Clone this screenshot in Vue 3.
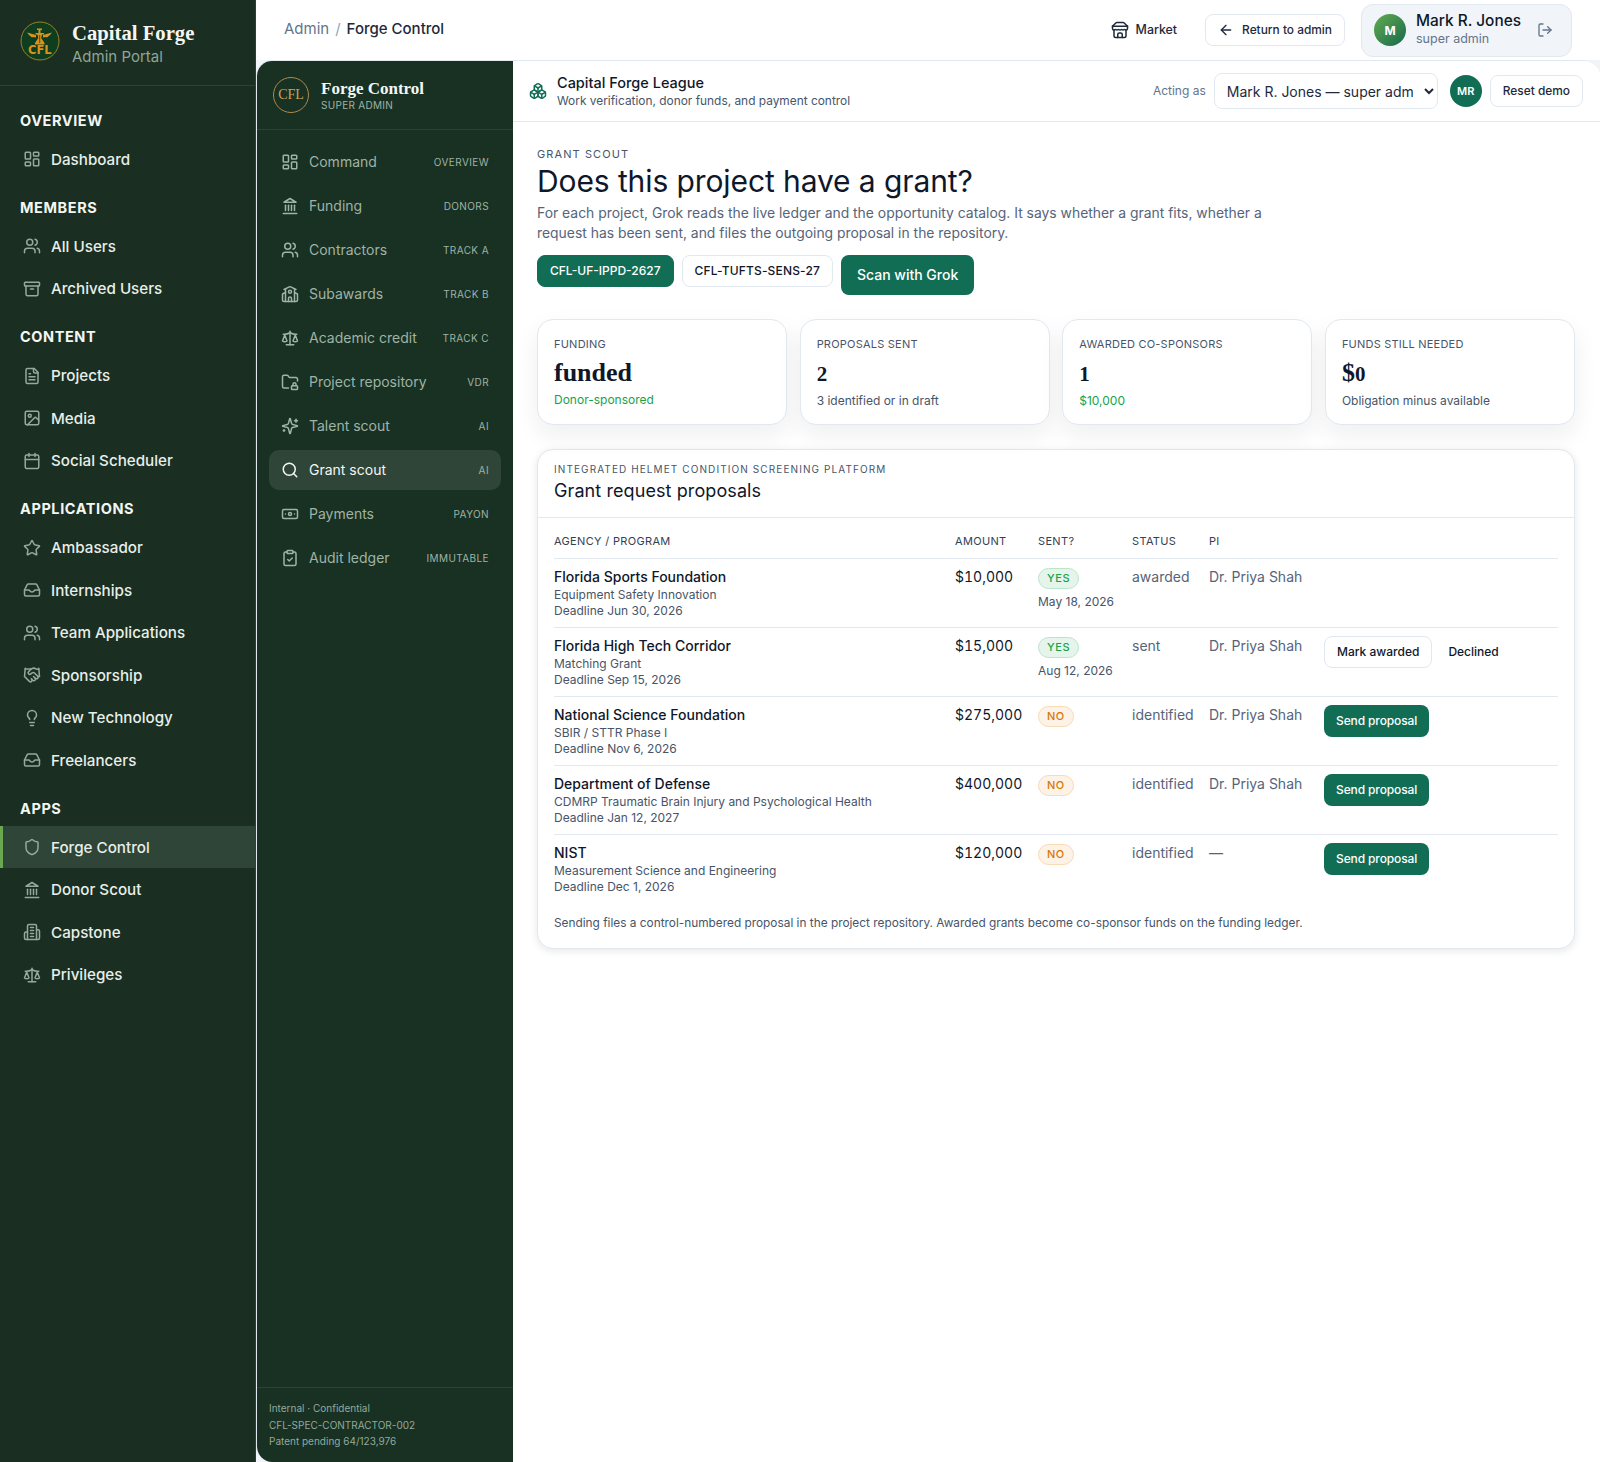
<script setup>
const rect = (x, y, w, h, r) =>
  `M${x + r} ${y}h${w - 2 * r}a${r} ${r} 0 0 1 ${r} ${r}v${h - 2 * r}a${r} ${r} 0 0 1-${r} ${r}h-${w - 2 * r}a${r} ${r} 0 0 1-${r}-${r}v-${h - 2 * r}a${r} ${r} 0 0 1 ${r}-${r}z`
const circle = (cx, cy, r) => `M${cx - r} ${cy}a${r} ${r} 0 1 0 ${2 * r} 0a${r} ${r} 0 1 0-${2 * r} 0z`

const icons = {
  dashboard: [rect(3, 3, 7, 9, 1), rect(14, 3, 7, 5, 1), rect(14, 12, 7, 9, 1), rect(3, 16, 7, 5, 1)],
  users: ['M16 21v-2a4 4 0 0 0-4-4H6a4 4 0 0 0-4 4v2', circle(9, 7, 4), 'M22 21v-2a4 4 0 0 0-3-3.87', 'M16 3.13a4 4 0 0 1 0 7.75'],
  archive: [rect(2, 3, 20, 5, 1), 'M4 8v11a2 2 0 0 0 2 2h12a2 2 0 0 0 2-2V8', 'M10 12h4'],
  file: ['M15 2H6a2 2 0 0 0-2 2v16a2 2 0 0 0 2 2h12a2 2 0 0 0 2-2V7Z', 'M14 2v4a2 2 0 0 0 2 2h4', 'M10 9H8', 'M16 13H8', 'M16 17H8'],
  image: [rect(3, 3, 18, 18, 2), circle(9, 9, 2), 'm21 15-3.086-3.086a2 2 0 0 0-2.828 0L6 21'],
  calendar: ['M8 2v4', 'M16 2v4', rect(3, 4, 18, 18, 2), 'M3 10h18'],
  star: ['M11.525 2.295a.53.53 0 0 1 .95 0l2.31 4.679a2.123 2.123 0 0 0 1.595 1.16l5.166.756a.53.53 0 0 1 .294.904l-3.736 3.638a2.123 2.123 0 0 0-.611 1.878l.882 5.14a.53.53 0 0 1-.771.56l-4.618-2.428a2.122 2.122 0 0 0-1.973 0L6.396 21.01a.53.53 0 0 1-.77-.56l.881-5.139a2.122 2.122 0 0 0-.611-1.879L2.16 9.795a.53.53 0 0 1 .294-.906l5.165-.755a2.122 2.122 0 0 0 1.597-1.16z'],
  inbox: ['M22 12h-5.500c-.8 0-1.300.5-1.700 1.200-.5.9-1.300 1.300-2.800 1.300s-2.300-.4-2.800-1.300C8.800 12.500 8.300 12 7.500 12H2', 'M5.450 5.110 2 12v6a2 2 0 0 0 2 2h16a2 2 0 0 0 2-2v-6l-3.450-6.890A2 2 0 0 0 16.760 4H7.240a2 2 0 0 0-1.790 1.110z'],
  handshake: ['m11 17 2 2a1 1 0 1 0 3-3', 'm14 14 2.5 2.5a1 1 0 1 0 3-3l-3.88-3.88a3 3 0 0 0-4.24 0l-.88.88a1 1 0 1 1-3-3l2.81-2.81a5.79 5.79 0 0 1 7.06-.87l.47.28a2 2 0 0 0 1.42.25L21 4', 'm21 3 1 11h-2', 'M3 3 2 14l6.5 6.5a1 1 0 1 0 3-3', 'M3 4h8'],
  bulb: ['M15 14c.2-1 .7-1.7 1.5-2.5 1-.9 1.5-2.2 1.5-3.5A6 6 0 0 0 6 8c0 1 .2 2.2 1.5 3.5.7.7 1.3 1.5 1.5 2.5', 'M9 18h6', 'M10 22h4'],
  shield: ['M20 13c0 5-3.5 7.5-7.66 8.95a1 1 0 0 1-.67-.01C7.5 20.5 4 18 4 13V6a1 1 0 0 1 1-1c2 0 4.5-1.2 6.24-2.72a1.17 1.17 0 0 1 1.52 0C14.51 3.81 17 5 19 5a1 1 0 0 1 1 1z'],
  landmark: ['M3 22h18', 'M6 18v-7', 'M10 18v-7', 'M14 18v-7', 'M18 18v-7', 'M12 2l8 5H4z'],
  building: ['M6 22V4a2 2 0 0 1 2-2h8a2 2 0 0 1 2 2v18Z', 'M6 12H4a2 2 0 0 0-2 2v6a2 2 0 0 0 2 2h2', 'M18 9h2a2 2 0 0 1 2 2v9a2 2 0 0 1-2 2h-2', 'M10 6h4', 'M10 10h4', 'M10 14h4', 'M10 18h4'],
  scale: ['m16 16 3-8 3 8c-.87.65-1.92 1-3 1s-2.13-.35-3-1Z', 'm2 16 3-8 3 8c-.87.65-1.92 1-3 1s-2.13-.35-3-1Z', 'M7 21h10', 'M12 3v18', 'M3 7h2c2 0 5-1 7-2 2 1 5 2 7 2h2'],
  school: ['M14 22v-4a2 2 0 1 0-4 0v4', 'm18 10 3.447 1.724a1 1 0 0 1 .553.894V20a2 2 0 0 1-2 2H4a2 2 0 0 1-2-2v-7.382a1 1 0 0 1 .553-.894L6 10', 'M18 5v17', 'm4 6 7.106-3.553a2 2 0 0 1 1.788 0L20 6', 'M6 5v17', circle(12, 9, 2)],
  folderLock: [rect(14, 17, 8, 5, 1), 'M10 20H4a2 2 0 0 1-2-2V5a2 2 0 0 1 2-2h3.9a2 2 0 0 1 1.69.9l.81 1.2a2 2 0 0 0 1.67.9H20a2 2 0 0 1 2 2v2.5', 'M20 17v-2a2 2 0 1 0-4 0v2'],
  sparkles: ['M9.937 15.5A2 2 0 0 0 8.5 14.063l-6.135-1.582a.5.5 0 0 1 0-.962L8.5 9.936A2 2 0 0 0 9.937 8.5l1.582-6.135a.5.5 0 0 1 .963 0L14.063 8.5A2 2 0 0 0 15.5 9.937l6.135 1.581a.5.5 0 0 1 0 .964L15.5 14.063a2 2 0 0 0-1.437 1.437l-1.582 6.135a.5.5 0 0 1-.963 0z', 'M20 3v4', 'M22 5h-4', 'M4 17v2', 'M5 18H3'],
  search: [circle(11, 11, 8), 'm21 21-4.3-4.3'],
  banknote: [rect(2, 6, 20, 12, 2), circle(12, 12, 2), 'M6 12h.01M18 12h.01'],
  clipboard: [rect(8, 2, 8, 4, 1), 'M16 4h2a2 2 0 0 1 2 2v14a2 2 0 0 1-2 2H6a2 2 0 0 1-2-2V6a2 2 0 0 1 2-2h2', 'm9 14 2 2 4-4'],
  store: ['m2 7 4.41-4.41A2 2 0 0 1 7.83 2h8.34a2 2 0 0 1 1.42.59L22 7', 'M4 12v8a2 2 0 0 0 2 2h12a2 2 0 0 0 2-2v-8', 'M15 22v-4a2 2 0 0 0-2-2h-2a2 2 0 0 0-2 2v4', 'M2 7h20', 'M22 7v3a2 2 0 0 1-2 2a2.7 2.7 0 0 1-1.59-.63.7.7 0 0 0-.82 0A2.7 2.7 0 0 1 16 12a2.7 2.7 0 0 1-1.59-.63.7.7 0 0 0-.82 0A2.7 2.7 0 0 1 12 12a2.7 2.7 0 0 1-1.59-.63.7.7 0 0 0-.82 0A2.7 2.7 0 0 1 8 12a2.7 2.7 0 0 1-1.59-.63.7.7 0 0 0-.82 0A2.7 2.7 0 0 1 4 12a2 2 0 0 1-2-2V7'],
  arrowLeft: ['m12 19-7-7 7-7', 'M19 12H5'],
  logout: ['M9 21H5a2 2 0 0 1-2-2V5a2 2 0 0 1 2-2h4', 'm16 17 5-5-5-5', 'M21 12H9'],
  boxes: ['M2.97 12.92A2 2 0 0 0 2 14.63v3.24a2 2 0 0 0 .97 1.71l3 1.8a2 2 0 0 0 2.06 0L12 19v-5.5l-5-3-4.03 2.42Z', 'm7 16.5-4.74-2.85', 'm7 16.5 5-3', 'M7 16.5v5.17', 'M12 13.5V19l3.97 2.38a2 2 0 0 0 2.06 0l3-1.8a2 2 0 0 0 .97-1.71v-3.24a2 2 0 0 0-.97-1.71L17 10.5l-5 3Z', 'm17 16.5-5-3', 'm17 16.5 4.74-2.85', 'M17 16.5v5.17', 'M7.97 4.42A2 2 0 0 0 7 6.13v4.37l5 3 5-3V6.13a2 2 0 0 0-.97-1.71l-3-1.8a2 2 0 0 0-2.06 0l-3 1.8Z', 'M12 8 7.26 5.15', 'm12 8 4.74-2.85', 'M12 13.5V8']
}

const sections = [
  { title: 'Overview', items: [{ label: 'Dashboard', icon: 'dashboard' }] },
  { title: 'Members', items: [{ label: 'All Users', icon: 'users' }, { label: 'Archived Users', icon: 'archive' }] },
  { title: 'Content', items: [{ label: 'Projects', icon: 'file' }, { label: 'Media', icon: 'image' }, { label: 'Social Scheduler', icon: 'calendar' }] },
  {
    title: 'Applications',
    items: [
      { label: 'Ambassador', icon: 'star' },
      { label: 'Internships', icon: 'inbox' },
      { label: 'Team Applications', icon: 'users' },
      { label: 'Sponsorship', icon: 'handshake' },
      { label: 'New Technology', icon: 'bulb' },
      { label: 'Freelancers', icon: 'inbox' }
    ]
  },
  {
    title: 'Apps',
    items: [
      { label: 'Forge Control', icon: 'shield', active: true },
      { label: 'Donor Scout', icon: 'landmark' },
      { label: 'Capstone', icon: 'building' },
      { label: 'Privileges', icon: 'scale' }
    ]
  }
]

const forgeNav = [
  { label: 'Command', tag: 'Overview', icon: 'dashboard' },
  { label: 'Funding', tag: 'Donors', icon: 'landmark' },
  { label: 'Contractors', tag: 'Track A', icon: 'users' },
  { label: 'Subawards', tag: 'Track B', icon: 'school' },
  { label: 'Academic credit', tag: 'Track C', icon: 'scale' },
  { label: 'Project repository', tag: 'VDR', icon: 'folderLock' },
  { label: 'Talent scout', tag: 'AI', icon: 'sparkles' },
  { label: 'Grant scout', tag: 'AI', icon: 'search', active: true },
  { label: 'Payments', tag: 'PayOn', icon: 'banknote' },
  { label: 'Audit ledger', tag: 'Immutable', icon: 'clipboard' }
]

const stats = [
  { label: 'Funding', value: 'funded', note: 'Donor-sponsored', good: true },
  { label: 'Proposals sent', digits: '2', note: '3 identified or in draft' },
  { label: 'Awarded co-sponsors', digits: '1', note: '$10,000', good: true },
  { label: 'Funds still needed', value: '$', digits: '0', note: 'Obligation minus available' }
]

const proposals = [
  { agency: 'Florida Sports Foundation', program: 'Equipment Safety Innovation', deadline: 'Jun 30, 2026', amount: '$10,000', sent: true, date: 'May 18, 2026', status: 'awarded', pi: 'Dr. Priya Shah' },
  { agency: 'Florida High Tech Corridor', program: 'Matching Grant', deadline: 'Sep 15, 2026', amount: '$15,000', sent: true, date: 'Aug 12, 2026', status: 'sent', pi: 'Dr. Priya Shah' },
  { agency: 'National Science Foundation', program: 'SBIR / STTR Phase I', deadline: 'Nov 6, 2026', amount: '$275,000', sent: false, status: 'identified', pi: 'Dr. Priya Shah' },
  { agency: 'Department of Defense', program: 'CDMRP Traumatic Brain Injury and Psychological Health', deadline: 'Jan 12, 2027', amount: '$400,000', sent: false, status: 'identified', pi: 'Dr. Priya Shah' },
  { agency: 'NIST', program: 'Measurement Science and Engineering', deadline: 'Dec 1, 2026', amount: '$120,000', sent: false, status: 'identified', pi: '—' }
]
</script>

<template>
  <div class="page">
    <aside class="portal">
      <div class="portal-brand">
        <svg class="logo" viewBox="0 0 40 40">
          <circle cx="20" cy="20" r="19" fill="#0f3d1f" stroke="#9a8428" stroke-width="1" />
          <g fill="#d9921c">
            <path d="M7 11.500l9 2.500v2.500l-3-.6-1 .6-3-2.400zM32 11.500l-9 2.500v2.500l3-.6 1 .6 3-2.400z" />
            <path d="M17 7.500h5v1.500h-1.500v3H24v1.500h-2l-.8 3.500 3.300 5v1.500H15v-1.500l3.300-5-.8-3.500h-2V12h3V9H17z" />
          </g>
          <path d="M19.700 14v8" stroke="#0f3d1f" stroke-width=".8" />
          <text x="19.800" y="33" text-anchor="middle" class="logo-text">CFL</text>
        </svg>
        <div class="portal-names">
          <div class="portal-title">Capital Forge</div>
          <div class="portal-sub">Admin Portal</div>
        </div>
      </div>
      <nav class="portal-nav">
        <div v-for="s in sections" :key="s.title" class="portal-section">
          <div class="portal-label">{{ s.title }}</div>
          <a v-for="item in s.items" :key="item.label" class="portal-item" :class="{ active: item.active }">
            <svg class="icon" viewBox="0 0 24 24"><path v-for="(d, i) in icons[item.icon]" :key="i" :d="d" /></svg>
            <span>{{ item.label }}</span>
          </a>
        </div>
      </nav>
    </aside>

    <div class="right">
      <header class="header">
        <div class="crumbs">
          <span class="crumb-muted">Admin</span>
          <span class="crumb-sep">/</span>
          <span class="crumb-current">Forge Control</span>
        </div>
        <div class="header-actions">
          <a class="market">
            <svg class="icon" viewBox="0 0 24 24"><path v-for="(d, i) in icons.store" :key="i" :d="d" /></svg>
            Market
          </a>
          <a class="return-btn">
            <svg class="icon small" viewBox="0 0 24 24"><path v-for="(d, i) in icons.arrowLeft" :key="i" :d="d" /></svg>
            Return to admin
          </a>
          <div class="user-pill">
            <div class="user-avatar">M</div>
            <div class="user-text">
              <div class="user-name">Mark R. Jones</div>
              <div class="user-role">super admin</div>
            </div>
            <svg class="icon small logout" viewBox="0 0 24 24"><path v-for="(d, i) in icons.logout" :key="i" :d="d" /></svg>
          </div>
        </div>
      </header>

      <div class="app">
        <aside class="forge">
          <div class="forge-brand">
            <div class="forge-seal">CFL</div>
            <div>
              <div class="forge-title">Forge Control</div>
              <div class="forge-sub">SUPER ADMIN</div>
            </div>
          </div>
          <nav class="forge-nav">
            <a v-for="item in forgeNav" :key="item.label" class="forge-item" :class="{ active: item.active }">
              <svg class="icon" viewBox="0 0 24 24"><path v-for="(d, i) in icons[item.icon]" :key="i" :d="d" /></svg>
              <span class="forge-label">{{ item.label }}</span>
              <span class="forge-tag">{{ item.tag }}</span>
            </a>
          </nav>
          <div class="forge-foot">
            <div>Internal · Confidential</div>
            <div>CFL-SPEC-CONTRACTOR-002</div>
            <div>Patent pending 64/123,976</div>
          </div>
        </aside>

        <main class="main">
          <div class="topbar">
            <svg class="icon boxes" viewBox="0 0 24 24"><path v-for="(d, i) in icons.boxes" :key="i" :d="d" /></svg>
            <div class="topbar-text">
              <div class="topbar-title">Capital Forge League</div>
              <div class="topbar-sub">Work verification, donor funds, and payment control</div>
            </div>
            <span class="acting">Acting as</span>
            <select class="acting-select">
              <option>Mark R. Jones — super admin</option>
            </select>
            <div class="mini-avatar">MR</div>
            <button class="reset">Reset demo</button>
          </div>

          <div class="content">
            <div class="eyebrow">GRANT SCOUT</div>
            <h1>Does this project have a grant?</h1>
            <p class="lead">For each project, Grok reads the live ledger and the opportunity catalog. It says whether a grant fits, whether a request has been sent, and files the outgoing proposal in the repository.</p>
            <div class="chips">
              <button class="chip on">CFL-UF-IPPD-2627</button>
              <button class="chip">CFL-TUFTS-SENS-27</button>
              <button class="scan">Scan with Grok</button>
            </div>

            <div class="stats">
              <div v-for="s in stats" :key="s.label" class="stat">
                <div class="stat-label">{{ s.label }}</div>
                <div class="stat-value">{{ s.value }}<span v-if="s.digits" class="stat-digits">{{ s.digits }}</span></div>
                <div class="stat-note" :class="{ good: s.good }">{{ s.note }}</div>
              </div>
            </div>

            <section class="card">
              <div class="card-head">
                <div class="card-eyebrow">INTEGRATED HELMET CONDITION SCREENING PLATFORM</div>
                <h2>Grant request proposals</h2>
              </div>
              <div class="card-body">
                <table>
                  <colgroup>
                    <col class="col-agency" />
                    <col class="col-amount" />
                    <col class="col-sent" />
                    <col class="col-status" />
                    <col class="col-pi" />
                    <col />
                  </colgroup>
                  <thead>
                    <tr>
                      <th>AGENCY / PROGRAM</th>
                      <th>AMOUNT</th>
                      <th>SENT?</th>
                      <th>STATUS</th>
                      <th>PI</th>
                      <th></th>
                    </tr>
                  </thead>
                  <tbody>
                    <tr v-for="p in proposals" :key="p.agency">
                      <td>
                        <div class="agency">{{ p.agency }}</div>
                        <div class="small-line">{{ p.program }}</div>
                        <div class="small-line">Deadline {{ p.deadline }}</div>
                      </td>
                      <td class="amount">{{ p.amount }}</td>
                      <td>
                        <span class="badge" :class="p.sent ? 'yes' : 'no'">{{ p.sent ? 'YES' : 'NO' }}</span>
                        <div v-if="p.date" class="small-line date">{{ p.date }}</div>
                      </td>
                      <td class="muted">{{ p.status }}</td>
                      <td class="muted">{{ p.pi }}</td>
                      <td>
                        <div class="actions">
                          <template v-if="p.status === 'sent'">
                            <button class="outline">Mark awarded</button>
                            <button class="ghost">Declined</button>
                          </template>
                          <button v-else-if="p.status === 'identified'" class="send">Send proposal</button>
                        </div>
                      </td>
                    </tr>
                  </tbody>
                </table>
                <p class="card-note">Sending files a control-numbered proposal in the project repository. Awarded grants become co-sponsor funds on the funding ledger.</p>
              </div>
            </section>
          </div>
        </main>
      </div>
    </div>
  </div>
</template>

<style>
html, body { margin: 0; background: #fff; }
</style>

<style scoped>
.page {
  display: flex;
  width: 100%;
  height: 100vh;
  overflow: hidden;
  font-family: Inter, "Liberation Sans", sans-serif;
  color: #0f172a;
  background: #f1f5f9;
}

.icon {
  width: 18px;
  height: 18px;
  flex: none;
  fill: none;
  stroke: currentColor;
  stroke-width: 2;
  stroke-linecap: round;
  stroke-linejoin: round;
}

.icon.small {
  width: 16px;
  height: 16px;
}

/* portal sidebar */
.portal {
  width: 256px;
  flex: none;
  background: #1a2e22;
  color: #e8eee9;
  border-right: 1px solid #2c4235;
  box-sizing: border-box;
}

.portal-brand {
  display: flex;
  align-items: center;
  gap: 12px;
  height: 86px;
  padding-left: 20px;
  box-sizing: border-box;
  border-bottom: 1px solid #2c4235;
}

.logo {
  width: 40px;
  height: 40px;
  flex: none;
  margin-top: -3px;
}

.logo-text {
  font: 700 11.5px "DejaVu Sans", sans-serif;
  fill: #d9921c;
}

.portal-names {
  padding-top: 3px;
}

.portal-title {
  font-family: "Liberation Serif", serif;
  font-weight: 700;
  font-size: 20.7px;
  line-height: 25px;
  color: #f4f6f4;
}

.portal-sub {
  padding-top: 1px;
  font-size: 15px;
  line-height: 20px;
  color: #8ea697;
}

.portal-nav {
  padding-top: 24.5px;
}

.portal-section + .portal-section {
  margin-top: 17.25px;
}

.portal-label {
  padding-left: 20px;
  margin-bottom: 7.25px;
  font-size: 14.5px;
  line-height: 20px;
  font-weight: 700;
  letter-spacing: 0.04em;
  text-transform: uppercase;
  color: #f4f6f4;
}

.portal-item {
  display: flex;
  align-items: center;
  gap: 10px;
  height: 42.5px;
  padding-left: 23px;
  font-size: 15.2px;
  font-weight: 500;
  color: #e8eee9;
}

.portal-item .icon {
  color: #97a99d;
}

.portal-item.active {
  background: #2f4537;
  box-shadow: inset 3px 0 0 #6aa84f;
}

/* header */
.right {
  flex: 1;
  min-width: 0;
  display: flex;
  flex-direction: column;
}

.header {
  display: flex;
  align-items: center;
  justify-content: space-between;
  height: 60px;
  flex: none;
  padding: 0 28px;
  background: #fff;
}

.crumbs {
  display: flex;
  gap: 6px;
  padding-bottom: 3px;
  font-size: 15px;
}

.crumb-muted {
  color: #64748b;
}

.crumb-sep {
  color: #94a3b8;
}

.crumb-current {
  font-weight: 500;
  color: #1e293b;
}

.header-actions {
  display: flex;
  align-items: center;
}

.market {
  display: flex;
  align-items: center;
  gap: 7px;
  font-size: 12.4px;
  font-weight: 500;
  margin-right: 28px;
  padding-bottom: 1px;
  color: #1e293b;
}

.return-btn {
  display: flex;
  align-items: center;
  gap: 8px;
  height: 32px;
  padding: 0 12px 1px;
  box-sizing: border-box;
  border: 1px solid #e2e8f0;
  border-radius: 8px;
  font-size: 11.9px;
  font-weight: 500;
  color: #1e293b;
  margin-right: 16px;
}

.user-pill {
  display: flex;
  align-items: center;
  width: 211px;
  height: 53px;
  padding: 0 18px 0 12px;
  box-sizing: border-box;
  background: #f1f5f9;
  border: 1px solid #e2e8f0;
  border-radius: 12px;
}

.user-avatar {
  width: 32px;
  height: 32px;
  flex: none;
  display: flex;
  align-items: center;
  justify-content: center;
  border-radius: 50%;
  background: linear-gradient(135deg, #63ab4e, #17694f);
  color: #fff;
  font-size: 12px;
  font-weight: 700;
}

.user-text {
  flex: 1;
  margin-left: 10px;
  padding-bottom: 2px;
}

.user-name {
  font-size: 15.4px;
  line-height: 20px;
  font-weight: 500;
  color: #0f172a;
}

.user-role {
  font-size: 12.5px;
  line-height: 16px;
  color: #64748b;
}

.logout {
  color: #64748b;
}

/* forge app */
.app {
  flex: 1;
  min-height: 0;
  display: flex;
  background: #fff;
  border: 1px solid #e2e8f0;
  border-width: 1px 0 0 1px;
  border-radius: 16px 16px 0 16px;
  overflow: hidden;
}

.forge {
  width: 256px;
  flex: none;
  display: flex;
  flex-direction: column;
  background: #183123;
}

.forge-brand {
  display: flex;
  align-items: center;
  gap: 12px;
  height: 69px;
  padding-left: 16px;
  box-sizing: border-box;
  border-bottom: 1px solid #2c4235;
}

.forge-seal {
  width: 36px;
  height: 36px;
  display: flex;
  align-items: center;
  justify-content: center;
  box-sizing: border-box;
  border: 1px solid #b08a4a;
  border-radius: 50%;
  font-family: "Liberation Serif", serif;
  font-size: 14px;
  color: #c9a35a;
}

.forge-title {
  font-family: "Liberation Serif", serif;
  font-weight: 700;
  font-size: 17px;
  line-height: 21px;
  color: #f4f6f4;
}

.forge-sub {
  font-size: 10px;
  line-height: 13px;
  letter-spacing: 0.03em;
  color: #9fb3a6;
}

.forge-nav {
  flex: 1;
  display: flex;
  flex-direction: column;
  gap: 4px;
  padding: 12px;
}

.forge-item {
  display: flex;
  align-items: center;
  gap: 10px;
  height: 40px;
  padding: 0 12px;
  border-radius: 10px;
  color: #9fb3a6;
  font-size: 14px;
}

.forge-item span {
  padding-bottom: 1px;
}

.forge-item.active {
  background: #2f4537;
  color: #f4f6f4;
}

.forge-label {
  flex: 1;
}

.forge-tag {
  font-size: 10px;
  letter-spacing: 0.04em;
  text-transform: uppercase;
  color: #9fb3a6;
}

.forge-foot {
  height: 75px;
  flex: none;
  box-sizing: border-box;
  padding: 12px 12px 0;
  border-top: 1px solid #2c4235;
  font-size: 10px;
  line-height: 16.5px;
  color: #93a99b;
}

.main {
  flex: 1;
  min-width: 0;
  background: #fff;
}

.topbar {
  display: flex;
  align-items: center;
  height: 61px;
  box-sizing: border-box;
  padding: 0 17px 0 16px;
  border-bottom: 1px solid #e2e8f0;
}

.boxes {
  color: #116e55;
}

.topbar-text {
  flex: 1;
  margin-left: 10px;
  padding-bottom: 2px;
}

.topbar-title {
  font-size: 14.5px;
  line-height: 20px;
  font-weight: 500;
}

.topbar-sub {
  font-size: 11.9px;
  line-height: 15px;
  color: #475569;
}

.acting {
  font-size: 12px;
  color: #64748b;
  margin-right: 8px;
  padding-bottom: 2px;
}

.acting-select {
  width: 224px;
  height: 36px;
  padding: 0 8px;
  border: 1px solid #e2e8f0;
  border-radius: 8px;
  background: #fff;
  font: 14px Inter, sans-serif;
  color: #1e293b;
}

.mini-avatar {
  width: 32px;
  height: 32px;
  margin-left: 12px;
  display: flex;
  align-items: center;
  justify-content: center;
  border-radius: 50%;
  background: #116e55;
  color: #fff;
  font-size: 11px;
  font-weight: 600;
}

.reset {
  height: 32px;
  margin-left: 8px;
  padding: 0 12px 2px;
  border: 1px solid #e2e8f0;
  border-radius: 8px;
  background: #fff;
  font: 500 11.9px Inter, sans-serif;
  color: #1e293b;
}

.content {
  padding: 24px 25px 0 24px;
}

.eyebrow {
  font-size: 11px;
  line-height: 16px;
  letter-spacing: 0.1em;
  color: #475569;
}

h1 {
  margin: 0;
  font-size: 30px;
  line-height: 38px;
  font-weight: 400;
  letter-spacing: -0.1px;
  color: #0f172a;
}

.lead {
  margin: 3px 0 0;
  max-width: 760px;
  font-size: 13.9px;
  line-height: 20px;
  color: #56647a;
}

.chips {
  display: flex;
  align-items: flex-start;
  gap: 8px;
  margin-top: 12px;
}

.chip {
  height: 32px;
  padding: 0 12px 2px;
  border: 1px solid #e2e8f0;
  border-radius: 8px;
  background: #fff;
  font: 500 12px Inter, sans-serif;
  color: #0f172a;
}

.chip + .chip {
  letter-spacing: 0.15px;
}

.chip.on {
  background: #116e55;
  border-color: #116e55;
  color: #fff;
}

.scan {
  height: 40px;
  padding: 0 16px 2px;
  border: 0;
  border-radius: 8px;
  background: #116e55;
  color: #fff;
  font: 500 14px Inter, sans-serif;
}

.stats {
  display: grid;
  grid-template-columns: repeat(4, 1fr);
  gap: 12.5px;
  margin-top: 24px;
}

.stat {
  height: 106px;
  box-sizing: border-box;
  padding: 16px;
  border: 1px solid #e2e8f0;
  border-radius: 16px;
  background: #fff;
  box-shadow: 0 10px 24px rgba(15, 23, 42, 0.07);
}

.stat-label {
  font-size: 11px;
  line-height: 16px;
  text-transform: uppercase;
  letter-spacing: 0.02em;
  color: #475569;
}

.stat-value {
  margin-top: 5px;
  font-family: "Liberation Serif", serif;
  font-weight: 700;
  font-size: 26px;
  line-height: 32px;
  color: #0f172a;
}

.stat-digits {
  font-size: 21px;
}

.stat-note {
  margin-top: 3px;
  font-size: 12px;
  line-height: 15px;
  color: #475569;
}

.stat-note.good {
  color: #16a34a;
}

.card {
  margin-top: 24px;
  border: 1px solid #e2e8f0;
  border-radius: 16px;
  background: #fff;
  box-shadow: 0 2px 8px rgba(15, 23, 42, 0.1);
}

.card-head {
  height: 68px;
  box-sizing: border-box;
  padding: 12px 16px 0;
  border-bottom: 1px solid #e2e8f0;
}

.card-eyebrow {
  font-size: 10px;
  line-height: 14px;
  letter-spacing: 0.11em;
  color: #475569;
}

h2 {
  margin: 2px 0 0;
  font-size: 18px;
  line-height: 26px;
  font-weight: 400;
  letter-spacing: 0.005em;
  color: #0f172a;
}

.card-body {
  padding: 0 16px 17px;
}

table {
  width: 100%;
  table-layout: fixed;
  border-collapse: collapse;
}

.col-agency { width: 401px; }
.col-amount { width: 83px; }
.col-sent { width: 94px; }
.col-status { width: 77px; }
.col-pi { width: 115px; }

th {
  height: 40px;
  box-sizing: border-box;
  padding: 6px 0 0;
  text-align: left;
  font-size: 11px;
  font-weight: 400;
  letter-spacing: 0.03em;
  color: #334155;
  border-bottom: 1px solid #e2e8f0;
}

td {
  height: 69px;
  box-sizing: border-box;
  padding: 8px 0 0;
  vertical-align: top;
  font-size: 14px;
  line-height: 20px;
  border-bottom: 1px solid #e2e8f0;
}

tbody tr:last-child td {
  border-bottom: 0;
}

.agency {
  font-weight: 500;
  color: #0f172a;
}

.small-line {
  font-size: 12px;
  line-height: 16px;
  color: #475569;
}

.amount {
  font-variant-numeric: tabular-nums;
  color: #0f172a;
}

.muted {
  color: #56647a;
}

.badge {
  display: inline-block;
  height: 21px;
  padding: 0 8px;
  box-sizing: border-box;
  border-radius: 999px;
  font-size: 11px;
  line-height: 19px;
  font-weight: 500;
  letter-spacing: 0.05em;
  vertical-align: top;
  margin-top: 1px;
}

.badge.yes {
  background: #e6f5ec;
  border: 1px solid #bbe5cb;
  color: #16a34a;
}

.badge.no {
  background: #fdf2e6;
  border: 1px solid #fad9b5;
  color: #d97706;
}

.date {
  margin-top: 5px;
}

.actions {
  display: flex;
  align-items: center;
  gap: 4px;
}

.outline,
.ghost,
.send {
  height: 32px;
  padding: 0 12px 1px;
  border-radius: 8px;
  font: 500 12px Inter, sans-serif;
}

.outline {
  background: #fff;
  border: 1px solid #e2e8f0;
  color: #0f172a;
}

.ghost {
  background: transparent;
  border: 0;
  color: #0f172a;
}

.send {
  background: #116e55;
  border: 0;
  color: #fff;
  letter-spacing: -0.01em;
}

.card-note {
  margin: 12px 0 0;
  font-size: 11.85px;
  line-height: 16px;
  color: #475569;
}
</style>
